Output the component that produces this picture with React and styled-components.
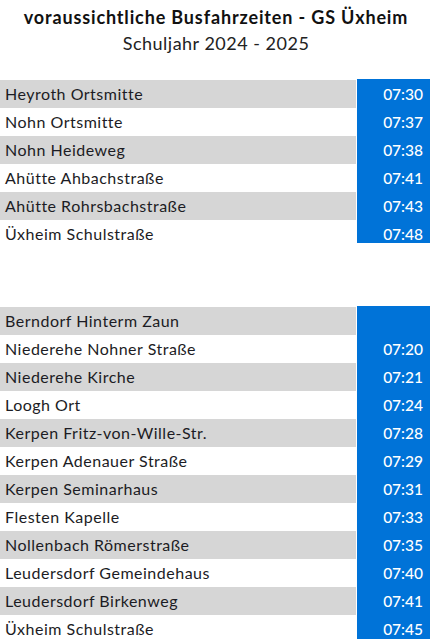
import React from "react";
import styled, { createGlobalStyle } from "styled-components";

const Global = createGlobalStyle`
  html, body { margin: 0; padding: 0; background: #fff; }
  body { width: 432px; height: 639px; overflow: hidden; }
`;

const Page = styled.div`
  width: 432px;
  display: flex;
  flex-direction: column;
  font-family: Lato, "Open Sans", sans-serif;
`;

const Header = styled.header`
  display: flex;
  flex-direction: column;
  align-items: center;
  padding-top: 5px;
  height: 74px;
  box-sizing: border-box;
`;

const Title = styled.h1`
  margin: 0;
  font-family: Lato, sans-serif;
  font-weight: 700;
  font-size: 18px;
  line-height: 24px;
  color: #111;
  letter-spacing: 0.85px;
  white-space: nowrap;
`;

const Subtitle = styled.div`
  font-family: Lato, sans-serif;
  font-weight: 400;
  font-size: 18px;
  line-height: 28px;
  color: #222;
  letter-spacing: 0.5px;
`;

const Table = styled.section`
  display: grid;
  grid-template-columns: 356px 73px;
  column-gap: 1px;
  margin-top: ${(p) => p.$top}px;
`;

const Names = styled.div`
  display: flex;
  flex-direction: column;
  padding-top: 1px;
`;

const NameRow = styled.div`
  height: 28px;
  display: flex;
  align-items: center;
  padding: 0 0 1px 5px;
  box-sizing: border-box;
  background: ${(p) => (p.$shaded ? "#d6d6d6" : "#fff")};
  font-size: 16px;
  letter-spacing: 0.5px;
  color: #1c1c24;
  white-space: nowrap;
`;

const Times = styled.div`
  background: #0073d8;
  display: flex;
  flex-direction: column;
  padding-top: 1px;
  align-self: start;
  height: ${(p) => p.$height}px;
  overflow: hidden;
  box-sizing: border-box;
`;

const TimeCell = styled.div`
  height: 28px;
  flex-shrink: 0;
  display: flex;
  align-items: center;
  justify-content: flex-end;
  padding: 0 7px 1px 0;
  box-sizing: border-box;
  color: #fff;
  font-size: 15.5px;
  font-weight: 500;
`;

const table1 = [
  ["Heyroth Ortsmitte", "07:30"],
  ["Nohn Ortsmitte", "07:37"],
  ["Nohn Heideweg", "07:38"],
  ["Ahütte Ahbachstraße", "07:41"],
  ["Ahütte Rohrsbachstraße", "07:43"],
  ["Üxheim Schulstraße", "07:48"],
];

const table2 = [
  ["Berndorf Hinterm Zaun", ""],
  ["Niederehe Nohner Straße", "07:20"],
  ["Niederehe Kirche", "07:21"],
  ["Loogh Ort", "07:24"],
  ["Kerpen Fritz-von-Wille-Str.", "07:28"],
  ["Kerpen Adenauer Straße", "07:29"],
  ["Kerpen Seminarhaus", "07:31"],
  ["Flesten Kapelle", "07:33"],
  ["Nollenbach Römerstraße", "07:35"],
  ["Leudersdorf Gemeindehaus", "07:40"],
  ["Leudersdorf Birkenweg", "07:41"],
  ["Üxheim Schulstraße", "07:45"],
];

function Schedule({ rows, top, blueHeight }) {
  return (
    <Table $top={top}>
      <Names>
        {rows.map(([name], i) => (
          <NameRow key={i} $shaded={i % 2 === 0}>
            {name}
          </NameRow>
        ))}
      </Names>
      <Times $height={blueHeight}>
        {rows.map(([, t], i) => (
          <TimeCell key={i}>{t}</TimeCell>
        ))}
      </Times>
    </Table>
  );
}

export default function App() {
  return (
    <Page>
      <Global />
      <Header>
        <Title>voraussichtliche Busfahrzeiten - GS Üxheim</Title>
        <Subtitle>Schuljahr 2024 - 2025</Subtitle>
      </Header>
      <Schedule rows={table1} top={5} blueHeight={164} />
      <Schedule rows={table2} top={58} blueHeight={340} />
    </Page>
  );
}
